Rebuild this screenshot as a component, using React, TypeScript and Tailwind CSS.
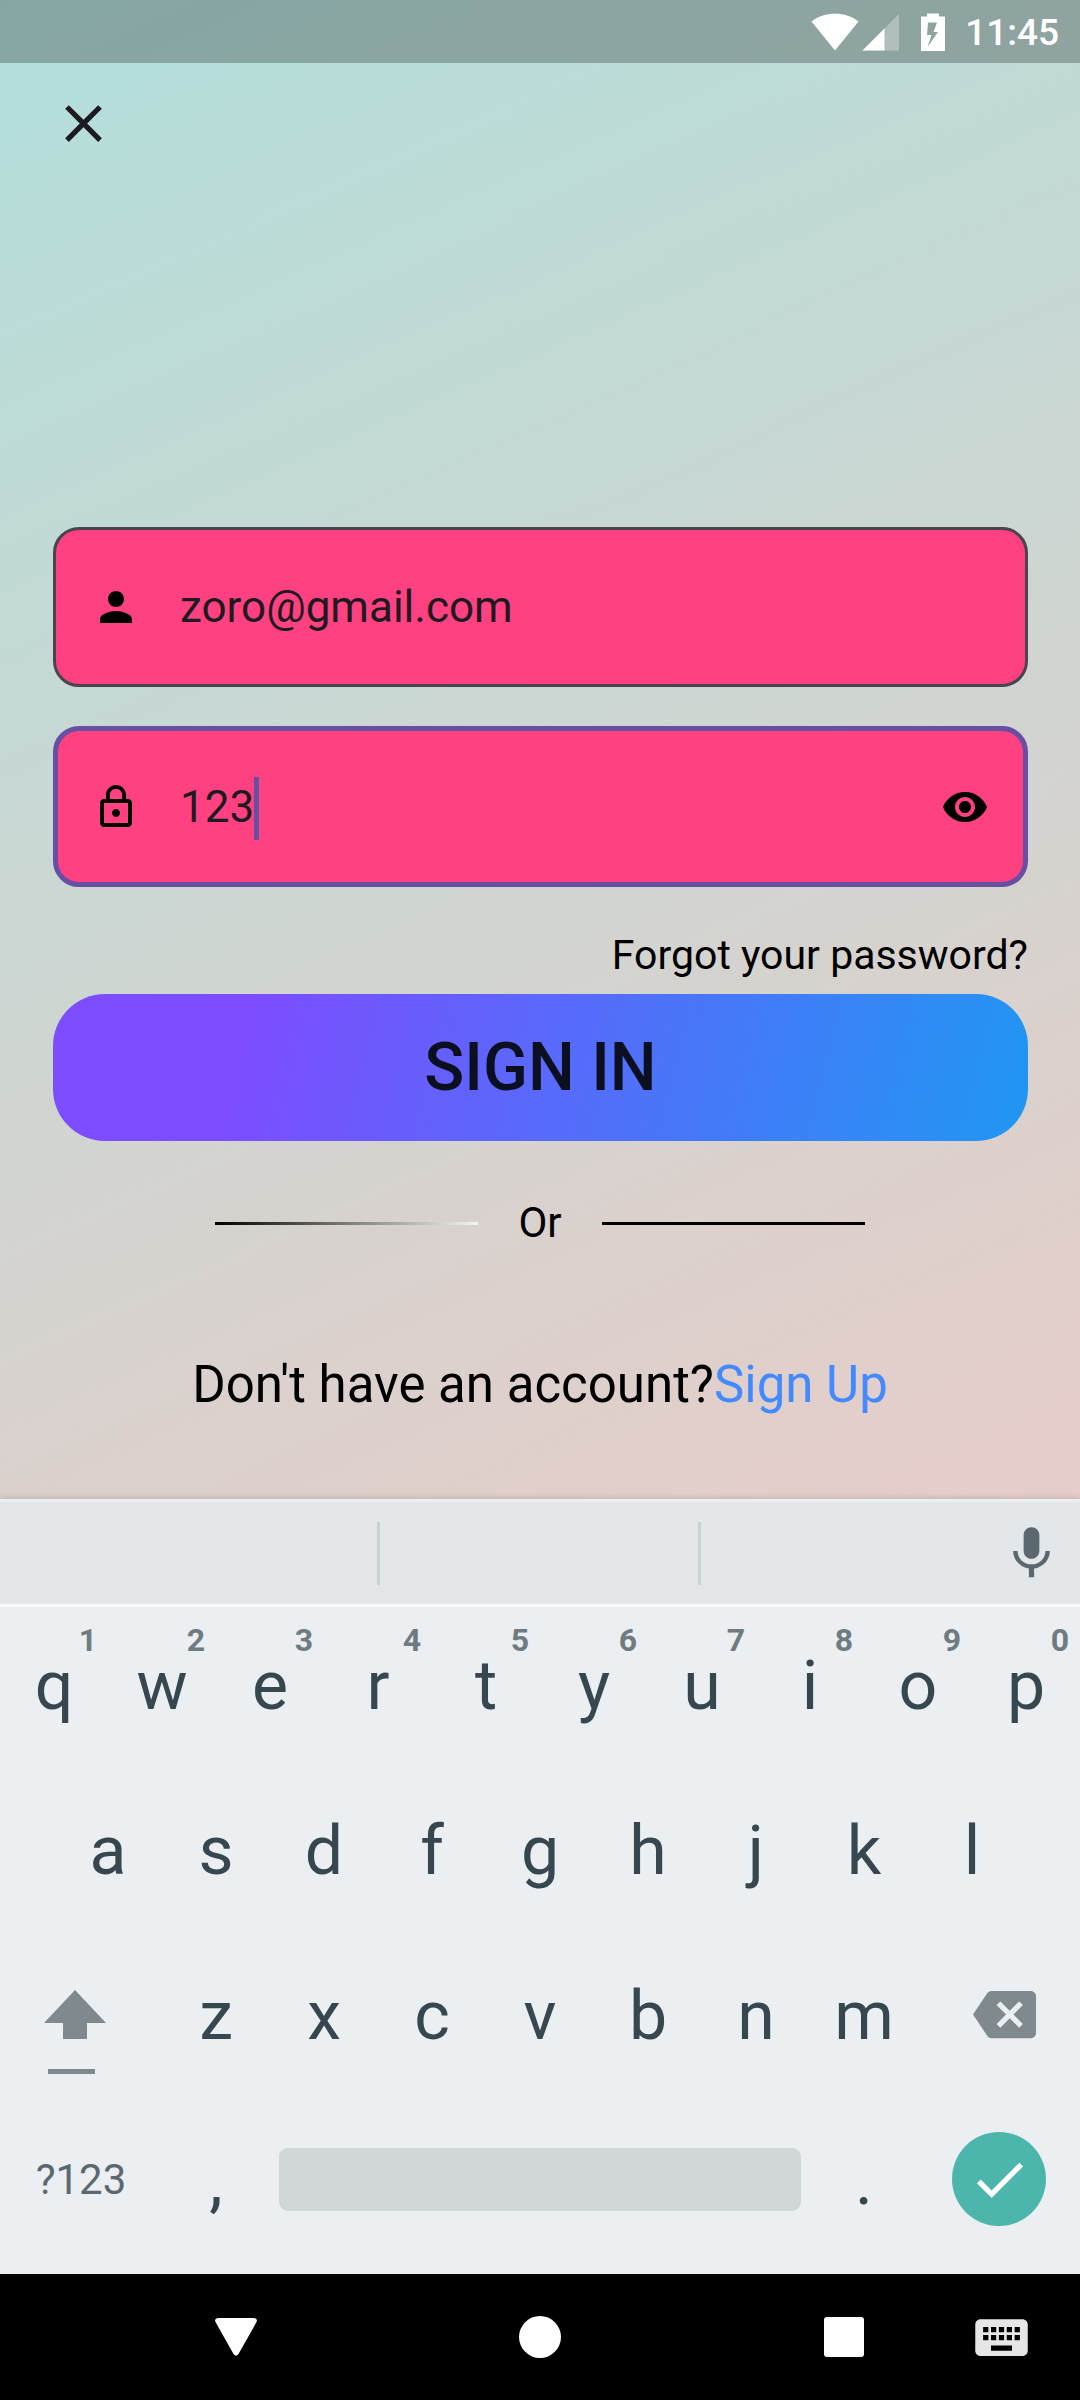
import React from "react";
import {
  MdBackspace,
  MdCheck,
  MdClose,
  MdKeyboard,
  MdLockOutline,
  MdMic,
  MdPerson,
  MdRemoveRedEye,
} from "react-icons/md";

function StatusBar() {
  return (
    <header className="flex h-[63px] items-center justify-end bg-black/25 pr-[21px] text-white">
      <svg className="h-[38px] w-[48px]" viewBox="0 0 48 38" fill="currentColor" aria-hidden="true">
        <path d="M24 37.500 L0.500 8.500 C13 -1.800 35 -1.800 47.500 8.500 Z" />
      </svg>
      <svg className="ml-[3px] h-[38px] w-[38px]" viewBox="0 0 38 38" fill="currentColor" aria-hidden="true">
        <path d="M37 1 V37.500 H0.500 Z" opacity="0.300" />
        <path d="M22.500 15.500 V37.500 H0.500 Z" />
      </svg>
      <svg className="ml-[20px] h-[38px] w-[26px]" viewBox="0 0 26 38" fill="currentColor" aria-hidden="true">
        <path
          fillRule="evenodd"
          d="M7 0.500 H19 V3.500 H25 V38 H1 V3.500 H7 Z M8 9.500 L7 22 H11.500 L7.500 34 L18 19 H13.500 L17 9.500 Z"
        />
      </svg>
      <span className="ml-[19px] pt-[2px] text-[37px] font-medium leading-none">11:45</span>
    </header>
  );
}

function LoginForm() {
  return (
    <form className="pr-[52px] pl-[53px]" onSubmit={(e) => e.preventDefault()}>
      <label className="flex h-[160px] items-center rounded-[26px] border-[3px] border-[#49454f] bg-[#ff4081] pl-[36px] text-[#1d1b20]">
        <MdPerson className="size-[48px] text-black" aria-hidden="true" />
        <input
          type="email"
          aria-label="Email"
          defaultValue="zoro@gmail.com"
          className="ml-[40px] min-w-0 flex-1 bg-transparent text-[44px] leading-[64px] outline-none"
        />
      </label>

      <div className="mt-[39px] flex h-[161px] items-center rounded-[26px] border-[5px] border-[#6750a4] bg-[#ff4081] px-[34px] text-[#1d1b20]">
        <MdLockOutline className="size-[48px] text-black" aria-hidden="true" />
        <input
          type="text"
          aria-label="Password"
          defaultValue="123"
          className="ml-[40px] field-sizing-content bg-transparent text-[44px] leading-[64px] caret-transparent outline-none"
        />
        <span className="mt-[4px] h-[63px] w-[5px] bg-[#6750a4]" />
        <button type="button" aria-label="Show password" className="ml-auto">
          <MdRemoveRedEye className="size-[48px] text-black" />
        </button>
      </div>

      <div className="mt-[40px] flex justify-end">
        <a href="#forgot" className="text-[41px] leading-[56px] text-black">
          Forgot your password?
        </a>
      </div>

      <button
        type="submit"
        className="mt-[11px] flex h-[147px] w-full items-center justify-center rounded-[52px] bg-[linear-gradient(104deg,#7c4dff_20%,#2196f3_99%)] text-[66px] font-medium text-[#0b0f20]"
      >
        SIGN IN
      </button>
    </form>
  );
}

function Divider() {
  return (
    <div className="mt-[52px] flex items-center justify-center gap-[40px] text-[42px] leading-[60px] text-black">
      <span className="h-[3px] w-[263px] bg-[linear-gradient(90deg,#000,#f5f5f5)]" />
      <span>Or</span>
      <span className="h-[3px] w-[263px] bg-black" />
    </div>
  );
}

const LETTER = "text-[68px] leading-[80px] text-[#37474f]";

function Keyboard() {
  return (
    <section aria-label="Keyboard" className="bg-[#ebeff2] shadow-[0_-1px_6px_rgba(0,0,0,0.15)]">
      <div className="flex h-[108px] items-center border-y-[3px] border-t-[#eceff1] border-b-[#f7f9fa] bg-[#e3e7ea]">
        <span className="h-[63px] w-[380px] border-r-[3px] border-[#cbd0d3]" />
        <span className="h-[63px] w-[321px] border-r-[3px] border-[#cbd0d3]" />
        <button type="button" aria-label="Voice input" className="mr-[17px] ml-auto">
          <MdMic className="size-[63px] text-[#5b696f]" />
        </button>
      </div>

      <div className="grid h-[165px] grid-cols-10">
        {[..."qwertyuiop"].map((k, i) => (
          <button key={k} type="button" className="flex flex-col items-center pt-[15px]">
            <span className="self-end pr-[11px] text-[32px] leading-[36px] font-bold text-[#6f7b81]">
              {(i + 1) % 10}
            </span>
            <span className={`${LETTER} -mt-[12px]`}>{k}</span>
          </button>
        ))}
      </div>

      <div className="grid h-[165px] grid-cols-9 px-[5%]">
        {[..."asdfghjkl"].map((k) => (
          <button key={k} type="button" className={`flex items-start justify-center pt-[39px] ${LETTER}`}>
            {k}
          </button>
        ))}
      </div>

      <div className="grid h-[165px] grid-cols-20">
        <button type="button" aria-label="Shift" className="col-span-3 flex justify-center pt-[53px] pr-[10px]">
          <svg className="h-[86px] w-[64px]" viewBox="0 0 64 86" fill="#808a8e" aria-hidden="true">
            <path d="M31 0 L62 33 H43 V49 H19 V33 H0 Z" />
            <path d="M4 79 H51 V84 H4 Z" />
          </svg>
        </button>
        {[..."zxcvbnm"].map((k) => (
          <button key={k} type="button" className={`col-span-2 flex items-start justify-center pt-[39px] ${LETTER}`}>
            {k}
          </button>
        ))}
        <button type="button" aria-label="Delete" className="col-span-3 flex items-start justify-center pt-[46px] pl-[11px]">
          <MdBackspace className="size-[63px] text-[#808a8e]" />
        </button>
      </div>

      <div className="grid h-[172px] grid-cols-20">
        <button
          type="button"
          className="col-span-3 flex items-start justify-center pt-[50px] text-[42px] leading-[56px] text-[#5b696f]"
        >
          ?123
        </button>
        <button type="button" className={`col-span-2 flex items-start justify-center pt-[39px] ${LETTER}`}>
          ,
        </button>
        <div className="col-span-10 px-[9px] pt-[46px]">
          <button type="button" aria-label="Space" className="block h-[63px] w-full rounded-[9px] bg-[#d1d6d9]" />
        </div>
        <button type="button" className={`col-span-2 flex items-start justify-center pt-[39px] ${LETTER}`}>
          .
        </button>
        <div className="col-span-3 flex items-start justify-center pt-[30px]">
          <button
            type="button"
            aria-label="Done"
            className="flex size-[94px] items-center justify-center rounded-full bg-[#4db6ac]"
          >
            <MdCheck className="size-[63px] text-white" />
          </button>
        </div>
      </div>
    </section>
  );
}

function NavBar() {
  return (
    <nav className="grid h-[126px] grid-cols-[1fr_304px_1fr] items-center bg-black text-white">
      <button type="button" aria-label="Back" className="mr-[131px] justify-self-end">
        <svg className="h-[40px] w-[42px]" viewBox="0 0 42 40" fill="currentColor" aria-hidden="true">
          <path d="M3 1 H39 Q43 1.500 41.500 5 L23.500 37 Q21 40.500 18.500 37 L0.500 5 Q-1 1.500 3 1 Z" />
        </svg>
      </button>
      <button type="button" aria-label="Home" className="size-[42px] justify-self-center rounded-full bg-white" />
      <div className="flex items-center justify-between pr-[47px] pl-[132px]">
        <button type="button" aria-label="Recents" className="size-[40px] rounded-[3px] bg-white" />
        <button type="button" aria-label="Switch keyboard">
          <MdKeyboard className="size-[63px] text-[#e6e6e6]" />
        </button>
      </div>
    </nav>
  );
}

export default function App() {
  return (
    <div className="flex min-h-screen flex-col bg-[linear-gradient(156deg,#b2dfdb,#ffc4c0)] font-[Roboto,sans-serif]">
      <StatusBar />
      <main className="flex flex-1 flex-col">
        <button type="button" aria-label="Close" className="mt-[29px] ml-[52px] self-start">
          <MdClose className="size-[63px] text-[#1d1b20]" />
        </button>
        <div className="mt-[372px]">
          <LoginForm />
        </div>
        <Divider />
        <p className="mt-[99px] text-center text-[51px] leading-[66px] text-black">
          Don't have an account?
          <a href="#signup" className="text-[#448aff]">
            Sign Up
          </a>
        </p>
      </main>
      <Keyboard />
      <NavBar />
    </div>
  );
}
